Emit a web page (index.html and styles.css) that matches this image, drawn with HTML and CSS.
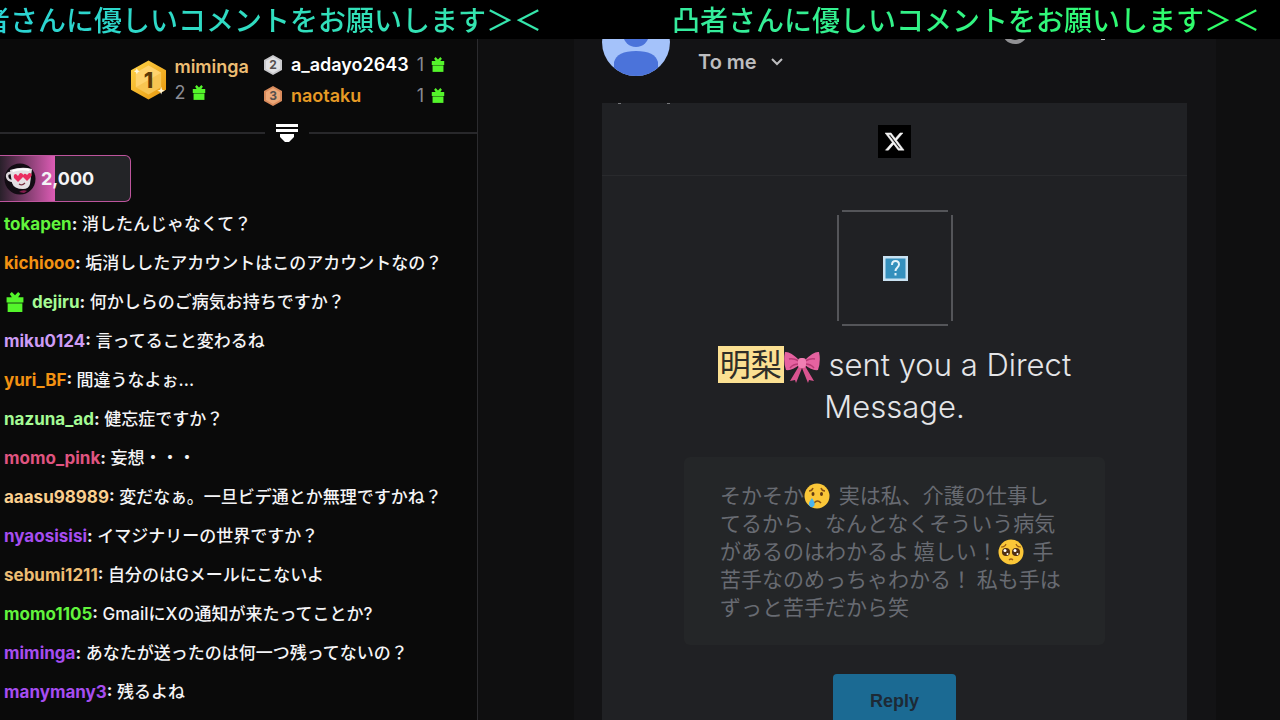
FILE: index.html
```html
<!DOCTYPE html>
<html lang="ja">
<head>
<meta charset="utf-8">
<meta name="viewport" content="width=device-width, initial-scale=1">
<title>Live chat</title>
<link rel="stylesheet" href="styles.css">
</head>
<body>
<svg width="0" height="0" class="defs" aria-hidden="true">
  <defs>
    <symbol id="gift" viewBox="0 0 18 19">
      <path d="M1 5h5L4 2l2-2 3 3 3-3 2 2-2 3h5v5H1z"/>
      <path d="M2 11h14v8H2z"/>
      <path d="M2 10h14v1H2z" opacity=".6"/>
    </symbol>
    <linearGradient id="gold" x1="0" y1="0" x2="1" y2="1"><stop offset="0" stop-color="#ffd54a"/><stop offset="1" stop-color="#e8960c"/></linearGradient>
  </defs>
</svg>
<div class="ticker"><div class="ticker-track"><span>凸者さんに優しいコメントをお願いします＞＜</span><span>凸者さんに優しいコメントをお願いします＞＜</span></div></div>
<div class="layout">
  <aside class="chat">
    <section class="leaders">
      <div class="leader-first">
        <svg class="badge-big" viewBox="0 0 38 42"><path d="M19 1 37 11v20L19 41 1 31V11z" fill="url(#gold)"/><path d="M19 6 32 13.500v15L19 36 6 28.500v-15z" fill="#f8c552"/><path d="M6 13.500 19 6l13 7.500L6 28.500z" fill="#ffd36d"/><path d="M31 31l1-3 1 3 3 1-3 1-1 3-1-3-3-1zM6 11l1-2 1 2 2 1-2 1-1 2-1-2-2-1z" fill="#fff6d8"/><text x="19" y="29" text-anchor="middle" class="rank-big">1</text></svg>
        <div><div class="name sand">miminga</div><div class="count">2 <svg class="gift"><use href="#gift"/></svg></div></div>
      </div>
      <div class="leader-rest">
        <svg class="badge" viewBox="0 0 20 22"><path d="M10 1l9 5v10l-9 5-9-5V6z" fill="#c9c9cc"/><path d="M10 3l7 4v8l-7 4-7-4V7z" fill="#e2e2e4"/><text x="10" y="15" text-anchor="middle" class="rank">2</text></svg>
        <div class="name white">a_adayo2643</div><div class="count">1 <svg class="gift"><use href="#gift"/></svg></div>
        <svg class="badge" viewBox="0 0 20 22"><path d="M10 1l9 5v10l-9 5-9-5V6z" fill="#d98b5c"/><path d="M10 3l7 4v8l-7 4-7-4V7z" fill="#eda878"/><text x="10" y="15" text-anchor="middle" class="rank">3</text></svg>
        <div class="name amber">naotaku</div><div class="count">1 <svg class="gift"><use href="#gift"/></svg></div>
      </div>
    </section>
    <div class="divider"><svg viewBox="0 0 22 19"><path d="M0 0h22v3H0zM0 5h22v3H0zM4 10h14v3l-5 5h-4l-5-5z" fill="#fff"/></svg></div>
    <div class="pill">
      <svg viewBox="0 0 32 32"><circle cx="16" cy="16" r="15.500" fill="#120c13"/><path d="M7 10C1 9 2 18 9 18" fill="none" stroke="#ddd8dc" stroke-width="2.500"/><path d="M6 7q12-4 22-1l-2 15q-1 5-7 5-9 0-11-6z" fill="#e4dfe3"/><path d="M8 7q10-3 18-1l-1 2q-9-2-16 1z" fill="#fff"/><path d="M14 19l-4-4q-1-4 2-4l2 2 2-3q4 0 3 4zM23 18l-4-4q0-4 3-3l1 1 2-2q4 0 2 4z" fill="#ea2c60"/><path d="M15 21q3 2 6-1" fill="none" stroke="#77303f" stroke-width="1.200"/><path d="M15 29q4-3 8-1l-3 2z" fill="#841b4c"/></svg>
      <strong>2,000</strong>
    </div>
    <ul class="messages">
      <li><b class="green">tokapen</b><b>:</b> 消したんじゃなくて？</li>
      <li><b class="orange">kichiooo</b><b>:</b> 垢消ししたアカウントはこのアカウントなの？</li>
      <li><svg class="gift-lead"><use href="#gift"/></svg><b class="mint">dejiru</b><b>:</b> 何かしらのご病気お持ちですか？</li>
      <li><b class="lilac">miku0124</b><b>:</b> 言ってること変わるね</li>
      <li><b class="orange">yuri_BF</b><b>:</b> 間違うなよぉ...</li>
      <li><b class="mint">nazuna_ad</b><b>:</b> 健忘症ですか？</li>
      <li><b class="rose">momo_pink</b><b>:</b> 妄想・・・</li>
      <li><b class="peach">aaasu98989</b><b>:</b> 変だなぁ。一旦ビデ通とか無理ですかね？</li>
      <li><b class="violet">nyaosisisi</b><b>:</b> イマジナリーの世界ですか？</li>
      <li><b class="sand">sebumi1211</b><b>:</b> 自分のはGメールにこないよ</li>
      <li><b class="green">momo1105</b><b>:</b> GmailにXの通知が来たってことか?</li>
      <li><b class="violet">miminga</b><b>:</b> あなたが送ったのは何一つ残ってないの？</li>
      <li><b class="violet">manymany3</b><b>:</b> 残るよね</li>
    </ul>
  </aside>
  <main class="stage">
    <article class="mail">
      <header class="mail-head">
        <svg class="avatar" viewBox="0 0 68 68"><clipPath id="round"><circle cx="34" cy="34" r="34"/></clipPath><g clip-path="url(#round)"><path d="M0 0h68v68H0z" fill="#a4c2fa"/><circle cx="34" cy="26" r="13" fill="#4b73da"/><path d="M12 68V54q3-11 22-11t22 11v14z" fill="#4b73da"/></g></svg>
        <div class="mail-meta">
          <div class="mail-actions">
            <svg viewBox="0 0 26 26"><circle cx="13" cy="13" r="11" fill="none" stroke="#919194" stroke-width="4"/></svg>
            <svg viewBox="0 0 26 26"><path d="M11 0h4v4h-4zM11 9h4v4h-4zM11 18h4v4h-4z" fill="#c4c4c6"/></svg>
          </div>
          <button class="recipient" type="button">To me <svg viewBox="0 0 12 8"><path d="M1 1l5 5 5-5" fill="none" stroke="#bdbdbf" stroke-width="2"/></svg></button>
        </div>
      </header>
      <section class="card">
        <div class="card-top">
          <svg viewBox="0 0 33 33"><path d="M0 0h33v33H0z" fill="#000"/><path transform="translate(6 6) scale(.88)" d="M18.244 2.250h3.308l-7.227 8.260 8.502 11.240H16.170l-5.214-6.817L4.990 21.750H1.680l7.730-8.835L1.254 2.250H8.080l4.713 6.231zm-1.161 17.520h1.833L7.084 4.126H5.117z" fill="#f4f4f4" stroke="#f4f4f4" stroke-width=".6"/></svg>
        </div>
        <div class="card-body">
          <svg class="missing" viewBox="0 0 116 116"><path d="M5 1h106M5 115h106M1 5v106M115 5v106" stroke="#66676b" stroke-width="1.500"/><path d="M46 46h25v25H46z" fill="#c9e2f2"/><path d="M48.500 48.500h20v20h-20z" fill="#3590bd"/><path d="M55 55q0-4 3.500-4t3.500 3.500c0 3-3.500 3-3.500 6.500M58.500 63v2.500" fill="none" stroke="#e3f2fa" stroke-width="2"/></svg>
          <h1><mark>明梨</mark><svg class="bow" viewBox="0 0 36 34"><path d="M15 16 6 31l5-1 1 3 6-15zM21 16l9 15-5-1-1 3-6-15z" fill="#d9548f"/><path d="M15 10Q6 1 1 2q-2 9 1 18 6 1 13-5zM21 10Q30 1 35 2q2 9-1 18-6 1-13-5z" fill="#e562a0"/><path d="M15 11Q9 8 5 9m10 5q-6 0-9 4m15-7q6-3 10-2m-10 5q6 0 9 4" fill="none" stroke="#b93b76" stroke-width="1.500"/><rect x="14" y="8" width="8" height="10" rx="3" fill="#f07fb3"/></svg> sent you a Direct<br>Message.</h1>
          <p class="quote">そかそか<svg class="face" viewBox="0 0 26 26"><circle cx="13" cy="13" r="12.500" fill="#fbc738"/><ellipse cx="9" cy="11" rx="1.500" ry="2" fill="#623b13"/><ellipse cx="17.500" cy="11" rx="1.500" ry="2" fill="#623b13"/><path d="M5 8q3 0 4-3m8 0q1 3 4 3M10 20q3.500-4 7 0" fill="none" stroke="#8a5314" stroke-width="1.500"/><path d="M8 15q-4 5-3 7 2 4 5 1 2-2-2-8z" fill="#4ab4ee"/></svg> 実は私、介護の仕事し<br>てるから、なんとなくそういう病気<br>があるのはわかるよ 嬉しい！<svg class="face" viewBox="0 0 26 26"><circle cx="13" cy="13" r="12.500" fill="#fbc738"/><circle cx="8" cy="13" r="4" fill="#4f2e12"/><circle cx="18" cy="13" r="4" fill="#4f2e12"/><circle cx="7" cy="11.500" r="1.500" fill="#fff"/><circle cx="17" cy="11.500" r="1.500" fill="#fff"/><circle cx="9.500" cy="15" r="1" fill="#fff"/><circle cx="19.500" cy="15" r="1" fill="#fff"/><path d="M3 8q4 0 5-3m10 0q1 3 5 3M11 21q2-2 4 0" fill="none" stroke="#9a5d15" stroke-width="1.200"/></svg> 手<br>苦手なのめっちゃわかる！ 私も手は<br>ずっと苦手だから笑</p>
          <button class="reply" type="button">Reply</button>
        </div>
      </section>
    </article>
  </main>
</div>
</body>
</html>
```
FILE: styles.css
```css
* { box-sizing: border-box; }
body {
  margin: 0;
  height: 100vh;
  overflow: hidden;
  background: #0a0a0a;
  color: #f4f4f6;
  font-family: Inter, "Noto Sans CJK JP", sans-serif;
}
svg { flex: none; }
.defs { position: absolute; }
.ticker {
  position: fixed;
  inset: 0 0 auto 0;
  z-index: 2;
  height: 39px;
  overflow: hidden;
  background: #000;
}
.ticker-track {
  display: flex;
  justify-content: flex-end;
  gap: 130px;
  padding-right: 20px;
  font: 500 28px/38px "Noto Sans CJK JP", sans-serif;
  white-space: nowrap;
  color: transparent;
  background: linear-gradient(90deg, #2bd3d3, #36e8a8 45%, #2eff63);
  background-clip: text;
  -webkit-background-clip: text;
}
.layout { display: flex; height: 100%; }
.chat {
  flex: 0 0 478px;
  padding-top: 39px;
  border-right: 1px solid #2b2b2e;
  overflow: hidden;
}
.leaders {
  display: flex;
  justify-content: flex-end;
  gap: 14px;
  height: 84px;
  padding: 10px 32px 0 0;
}
.leader-first { display: flex; align-items: center; gap: 7px; height: 61px; }
.badge-big { width: 37px; height: 42px; }
.badge { width: 20px; height: 22px; }
.rank-big { font: 800 22px Inter; fill: #5c3a06; }
.rank { font: 700 12px Inter; fill: #55504e; }
.name { font-size: 18px; font-weight: 600; line-height: 26px; }
.count { display: flex; align-items: center; gap: 7px; font-size: 18px; line-height: 26px; color: #8b8b93; }
.gift { width: 14px; height: 15px; fill: #54f52b; }
.gift-lead { width: 20px; height: 20px; margin: 0 7px 0 1px; fill: #54f52b; vertical-align: -4px; }
.leader-rest {
  display: grid;
  grid-template-columns: 20px auto auto;
  grid-auto-rows: 31px;
  align-items: center;
  column-gap: 8px;
}
.divider { display: flex; align-items: center; gap: 11px; height: 20px; }
.divider::before, .divider::after { content: ""; height: 2px; background: #28282b; }
.divider::before { flex: 265; }
.divider::after { flex: 168; }
.divider svg { width: 22px; height: 19px; }
.pill {
  display: flex;
  align-items: center;
  gap: 5px;
  width: 131px;
  height: 47px;
  margin-top: 12px;
  padding-left: 4px;
  border: 1px solid #bd559d;
  border-left: 0;
  border-radius: 0 6px 6px 0;
  background: linear-gradient(90deg, #29202a, #dd5cb5 55px, #232427 55px);
  font-size: 18px;
}
.pill svg { width: 32px; height: 32px; }
.messages { list-style: none; margin: 3px 0 0; padding: 0 4px; }
.messages li { height: 39px; font-size: 17px; font-weight: 500; line-height: 39px; white-space: nowrap; }
.white { color: #fff; }
.green { color: #62f53d; }
.mint { color: #a4fb94; }
.orange { color: #f39212; }
.amber { color: #e69a25; }
.lilac { color: #cd9cf5; }
.violet { color: #a64df0; }
.rose { color: #e05480; }
.peach { color: #fbd08f; }
.sand { color: #edbd73; }
.stage { flex: 1; padding: 0 5% 0 96px; background: #0f0f10; overflow: hidden; }
.mail { height: 100%; padding: 8px 29px 0 28px; background: #131315; }
.mail-head { display: flex; gap: 28px; height: 95px; }
.avatar { width: 68px; height: 68px; }
.mail-meta { flex: 1; }
.mail-actions { display: flex; justify-content: flex-end; gap: 62px; height: 36px; padding: 10px 71px 0 0; }
.mail-actions svg { width: 26px; height: 26px; }
.recipient {
  display: flex;
  align-items: center;
  gap: 14px;
  padding: 0;
  margin-top: 6px;
  border: 0;
  background: none;
  color: #bdbdbf;
  font: 600 20px/24px Inter, sans-serif;
}
.recipient svg { width: 12px; height: 8px; }
.card {
  height: 100%;
  background:
    linear-gradient(#77787b, #77787b) 16px 0 / 3px 1px no-repeat,
    linear-gradient(#77787b, #77787b) 65px 0 / 3px 1px no-repeat,
    #202124;
}
.card-top { display: flex; justify-content: center; align-items: center; height: 73px; padding-top: 4px; border-bottom: 1px solid #292a2d; }
.card-top svg { width: 33px; height: 33px; }
.card-body { display: flex; flex-direction: column; align-items: center; padding: 34px 24px 0; }
.missing { width: 116px; height: 116px; fill: none; }
h1 { margin: 18px 0 0; font: 300 31px/42px Inter, "Noto Sans CJK JP", sans-serif; text-align: center; color: #e4e5e8; }
mark { padding: 0 2px; background: #fbe092; color: #302e28; font-weight: 400; }
.bow { width: 36px; height: 34px; vertical-align: -8px; }
.quote {
  width: 100%;
  max-width: 421px;
  margin: 29px 0 0;
  padding: 23px 0 25px 36px;
  border-radius: 6px;
  background: #242628;
  color: #686b72;
  font: 400 21px/28px "Noto Sans CJK JP", sans-serif;
  white-space: nowrap;
}
.face { width: 26px; height: 26px; margin: -4px 4px -4px 0; vertical-align: -2px; }
.reply {
  width: 123px;
  height: 54px;
  margin-top: 29px;
  border: 0;
  border-radius: 4px;
  background: #1b6a93;
  color: #1d2a36;
  font: 700 18px "Liberation Sans", sans-serif;
}
```
